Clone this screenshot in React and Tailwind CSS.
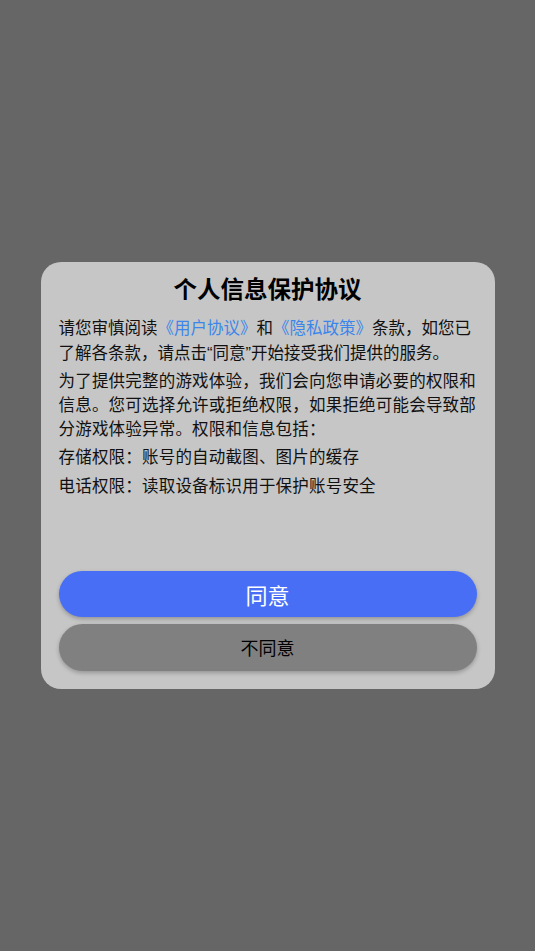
import React from 'react';

const App = () => {
    return (
        <div className="min-h-screen w-full bg-[#666666] flex items-center justify-center" style={{ fontFamily: '"Noto Sans CJK SC", "Noto Sans", sans-serif' }}>
            <div className="w-[454px] h-[427px] bg-[#c6c6c6] rounded-[20px] px-[18px] pt-[10px] pb-[18px] flex flex-col">
                <h2 className="text-center text-[23.5px] font-bold text-black leading-[32px]">个人信息保护协议</h2>

                <div className="mt-[11px] text-[16.5px] leading-[24px] text-[#111] whitespace-nowrap">
                    <p className="leading-[25px]">
                        <span className="block">
                            请您审慎阅读<span className="text-[#3b86ea]">《用户协议》</span>和<span className="text-[#3b86ea]">《隐私政策》</span>条款，如您已
                        </span>
                        <span className="block">
                            了解各条款，请点击<span className="font-['Liberation_Sans']">“</span>同意<span className="font-['Liberation_Sans']">”</span>开始接受我们提供的服务。
                        </span>
                    </p>
                    <p className="mt-[2px] tracking-[0.2px]">
                        <span className="block">为了提供完整的游戏体验，我们会向您申请必要的权限和</span>
                        <span className="block">信息。您可选择允许或拒绝权限，如果拒绝可能会导致部</span>
                        <span className="block">分游戏体验异常。权限和信息包括：</span>
                    </p>
                    <p className="mt-[4px] tracking-[0.2px]">存储权限：账号的自动截图、图片的缓存</p>
                    <p className="mt-[5px] tracking-[0.2px]">电话权限：读取设备标识用于保护账号安全</p>
                </div>

                <div className="mt-auto flex flex-col gap-[7px]">
                    <button className="h-[46px] w-full rounded-full bg-[#476ef5] text-white text-[22px] shadow-[0_2px_4px_rgba(0,0,0,0.25)]">
                        同意
                    </button>
                    <button className="h-[47px] w-full rounded-full bg-[#808080] text-black text-[18px] shadow-[0_2px_4px_rgba(0,0,0,0.25)]">
                        不同意
                    </button>
                </div>
            </div>
        </div>
    );
};

export default App;
